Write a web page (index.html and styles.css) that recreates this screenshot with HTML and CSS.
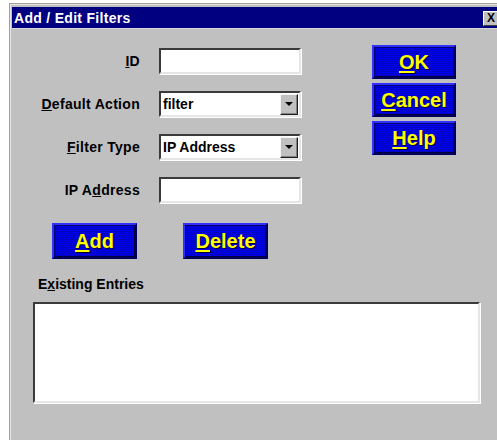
FILE: index.html
```html
<!DOCTYPE html>
<html>
<head>
<meta charset="utf-8">
<title>Add / Edit Filters</title>
<link rel="stylesheet" href="styles.css">
</head>
<body>
<div class="window">
  <div class="titlebar">
    <span class="title">Add / Edit Filters</span>
    <span class="close">X</span>
  </div>
  <div class="content">
    <div class="top">
      <div class="form">
        <span class="lbl"><u>I</u>D</span>
        <div class="field"></div>
        <span class="lbl"><u>D</u>efault Action</span>
        <div class="field select"><span class="val">filter</span><span class="arrow"></span></div>
        <span class="lbl"><u>F</u>ilter Type</span>
        <div class="field select"><span class="val">IP Address</span><span class="arrow"></span></div>
        <span class="lbl">IP A<u>d</u>dress</span>
        <div class="field"></div>
      </div>
      <div class="side">
        <div class="btn"><u>O</u>K</div>
        <div class="btn"><u>C</u>ancel</div>
        <div class="btn"><u>H</u>elp</div>
      </div>
    </div>
    <div class="actions">
      <div class="btn wide"><u>A</u>dd</div>
      <div class="btn wide"><u>D</u>elete</div>
    </div>
    <div class="entries-lbl">E<u>x</u>isting Entries</div>
    <div class="listbox"></div>
  </div>
</div>
</body>
</html>
```
FILE: styles.css
```css
html, body {
  margin: 0;
  padding: 0;
  background: #ffffff;
  overflow: hidden;
  height: 100%;
}

body {
  font-family: "Liberation Sans", Arial, sans-serif;
  font-weight: bold;
  font-size: 14px;
  color: #000;
}

.window {
  box-sizing: border-box;
  width: 492px;
  height: 437px;
  overflow: hidden;
  margin: 3px 0 0 9px;
  padding: 3px 0 0 2px;
  background: #c0c0c0;
  border-top: 1px solid #a0a0a0;
  border-left: 1px solid #a0a0a0;
  box-shadow: inset 1px 1px #e4e4e4;
}

/* caption bar */
.titlebar {
  height: 21px;
  background: #000080;
  display: flex;
  align-items: center;
  padding: 0 2px 0 2px;
  border-bottom: 1px solid #d8d8d8;
}

.title {
  color: #fff;
  font-size: 14px;
  line-height: 16px;
  letter-spacing: 0.3px;
}

.close {
  margin-left: auto;
  box-sizing: border-box;
  width: 16px;
  height: 15px;
  background: #c0c0c0;
  border: 1px solid;
  border-color: #ffffff #404040 #404040 #ffffff;
  font-size: 12px;
  line-height: 13px;
  text-align: center;
  color: #000;
  margin-top: 2px;
}

.content {
  padding: 16px 0 0 0;
}

.top {
  display: flex;
  align-items: flex-start;
}

/* label / field grid */
.form {
  margin-top: 3px;
  display: grid;
  grid-template-columns: 128px 142px;
  column-gap: 19px;
  row-gap: 17px;
  align-items: center;
}

.lbl {
  text-align: right;
  line-height: 16px;
  letter-spacing: 0.3px;
}

.field {
  box-sizing: border-box;
  height: 26px;
  background: #fff;
  border: 2px solid;
  border-color: #3a3a3a #e6e6e6 #e6e6e6 #3a3a3a;
  box-shadow: 1px 1px #ffffff;
}

.select {
  display: flex;
  align-items: center;
  padding-left: 2px;
}

.val {
  flex: 1;
  line-height: 16px;
}

.arrow {
  box-sizing: border-box;
  width: 18px;
  height: 21px;
  margin-right: 1px;
  background: #c0c0c0;
  border: 1px solid;
  border-color: #f4f4f4 #202020 #202020 #f4f4f4;
  box-shadow: inset -1px -1px #808080;
  position: relative;
}

.arrow::after {
  content: "";
  position: absolute;
  left: 4px;
  top: 7px;
  border-left: 4px solid transparent;
  border-right: 4px solid transparent;
  border-top: 4px solid #000;
}

/* right-hand command buttons */
.side {
  margin-left: 71px;
  display: flex;
  flex-direction: column;
  gap: 4px;
}

.btn {
  box-sizing: border-box;
  width: 84px;
  height: 34px;
  display: flex;
  align-items: center;
  justify-content: center;
  color: #ffff00;
  font-size: 20px;
  text-shadow: 1px 1px #000030;
  background: repeating-conic-gradient(#0000ee 0 25%, #0000c0 0 50%) 0 0 / 2px 2px;
  border: 2px solid;
  border-color: #3030ff #00005a #00005a #3030ff;
  box-shadow: inset 1px 1px #000070, inset -1px -1px #000040;
}

.btn u {
  text-decoration-thickness: 2px;
  text-underline-offset: 2px;
}

.actions {
  display: flex;
  gap: 46px;
  margin: 20px 0 0 40px;
}

.btn.wide {
  width: 85px;
  height: 36px;
}

.entries-lbl {
  margin: 17px 0 0 26px;
  line-height: 16px;
}

.listbox {
  box-sizing: border-box;
  width: 447px;
  height: 101px;
  margin: 10px 0 0 21px;
  background: #fff;
  border: 2px solid;
  border-color: #3a3a3a #e6e6e6 #e6e6e6 #3a3a3a;
  box-shadow: 1px 1px #ffffff;
}
```
